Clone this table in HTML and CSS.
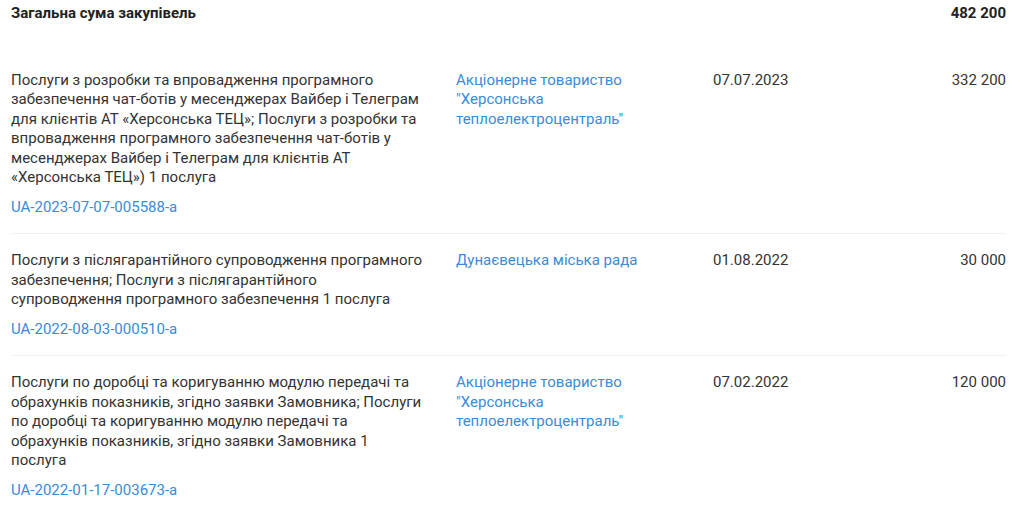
FILE: index.html
```html
<!DOCTYPE html>
<html lang="uk">
<head>
<meta charset="utf-8">
<title>Закупівлі</title>
<link rel="stylesheet" href="styles.css">
</head>
<body>
<div class="list">
  <div class="total">
    <div class="total-label">Загальна сума закупівель</div>
    <div class="total-sum">482 200</div>
  </div>

  <div class="row">
    <div class="desc">
      <div class="desc-text">Послуги з розробки та впровадження програмного забезпечення чат-ботів у месенджерах Вайбер і Телеграм для клієнтів АТ «Херсонська ТЕЦ»; Послуги з розробки та впровадження програмного забезпечення чат-ботів у месенджерах Вайбер і Телеграм для клієнтів АТ «Херсонська ТЕЦ») 1 послуга</div>
      <a class="link id" href="#">UA-2023-07-07-005588-a</a>
    </div>
    <a class="link org" href="#">Акціонерне товариство "Херсонська теплоелектроцентраль"</a>
    <div class="date">07.07.2023</div>
    <div class="sum">332 200</div>
  </div>

  <div class="row">
    <div class="desc">
      <div class="desc-text">Послуги з післягарантійного супроводження програмного забезпечення; Послуги з післягарантійного супроводження програмного забезпечення 1 послуга</div>
      <a class="link id" href="#">UA-2022-08-03-000510-a</a>
    </div>
    <a class="link org" href="#">Дунаєвецька міська рада</a>
    <div class="date">01.08.2022</div>
    <div class="sum">30 000</div>
  </div>

  <div class="row">
    <div class="desc">
      <div class="desc-text">Послуги по доробці та коригуванню модулю передачі та обрахунків показників, згідно заявки Замовника; Послуги по доробці та коригуванню модулю передачі та обрахунків показників, згідно заявки Замовника 1 послуга</div>
      <a class="link id" href="#">UA-2022-01-17-003673-a</a>
    </div>
    <a class="link org" href="#">Акціонерне товариство "Херсонська теплоелектроцентраль"</a>
    <div class="date">07.02.2022</div>
    <div class="sum">120 000</div>
  </div>
</div>
</body>
</html>
```
FILE: styles.css
```css
html, body {
  margin: 0;
  padding: 0;
  background: #fff;
}

body {
  font-family: Roboto, "Liberation Sans", sans-serif;
  font-size: 15px;
  line-height: 19.5px;
  color: #333;
}

.list {
  padding: 4px 18px 0 11px;
}

.total {
  display: flex;
  justify-content: space-between;
  padding-bottom: 30px;
  font-weight: 700;
  color: #222;
}

.row {
  display: grid;
  grid-template-columns: 445px 257px 1fr auto;
  align-items: start;
  padding: 17px 0 16px;
  border-bottom: 1px solid #f0f0f0;
}

.row:last-child {
  border-bottom: none;
}

.desc {
  padding-right: 31px;
}

.org {
  padding-right: 20px;
}

.link {
  color: #3a8bd8;
  text-decoration: none;
}

.id {
  display: block;
  margin-top: 10px;
}

.sum {
  text-align: right;
}
```
